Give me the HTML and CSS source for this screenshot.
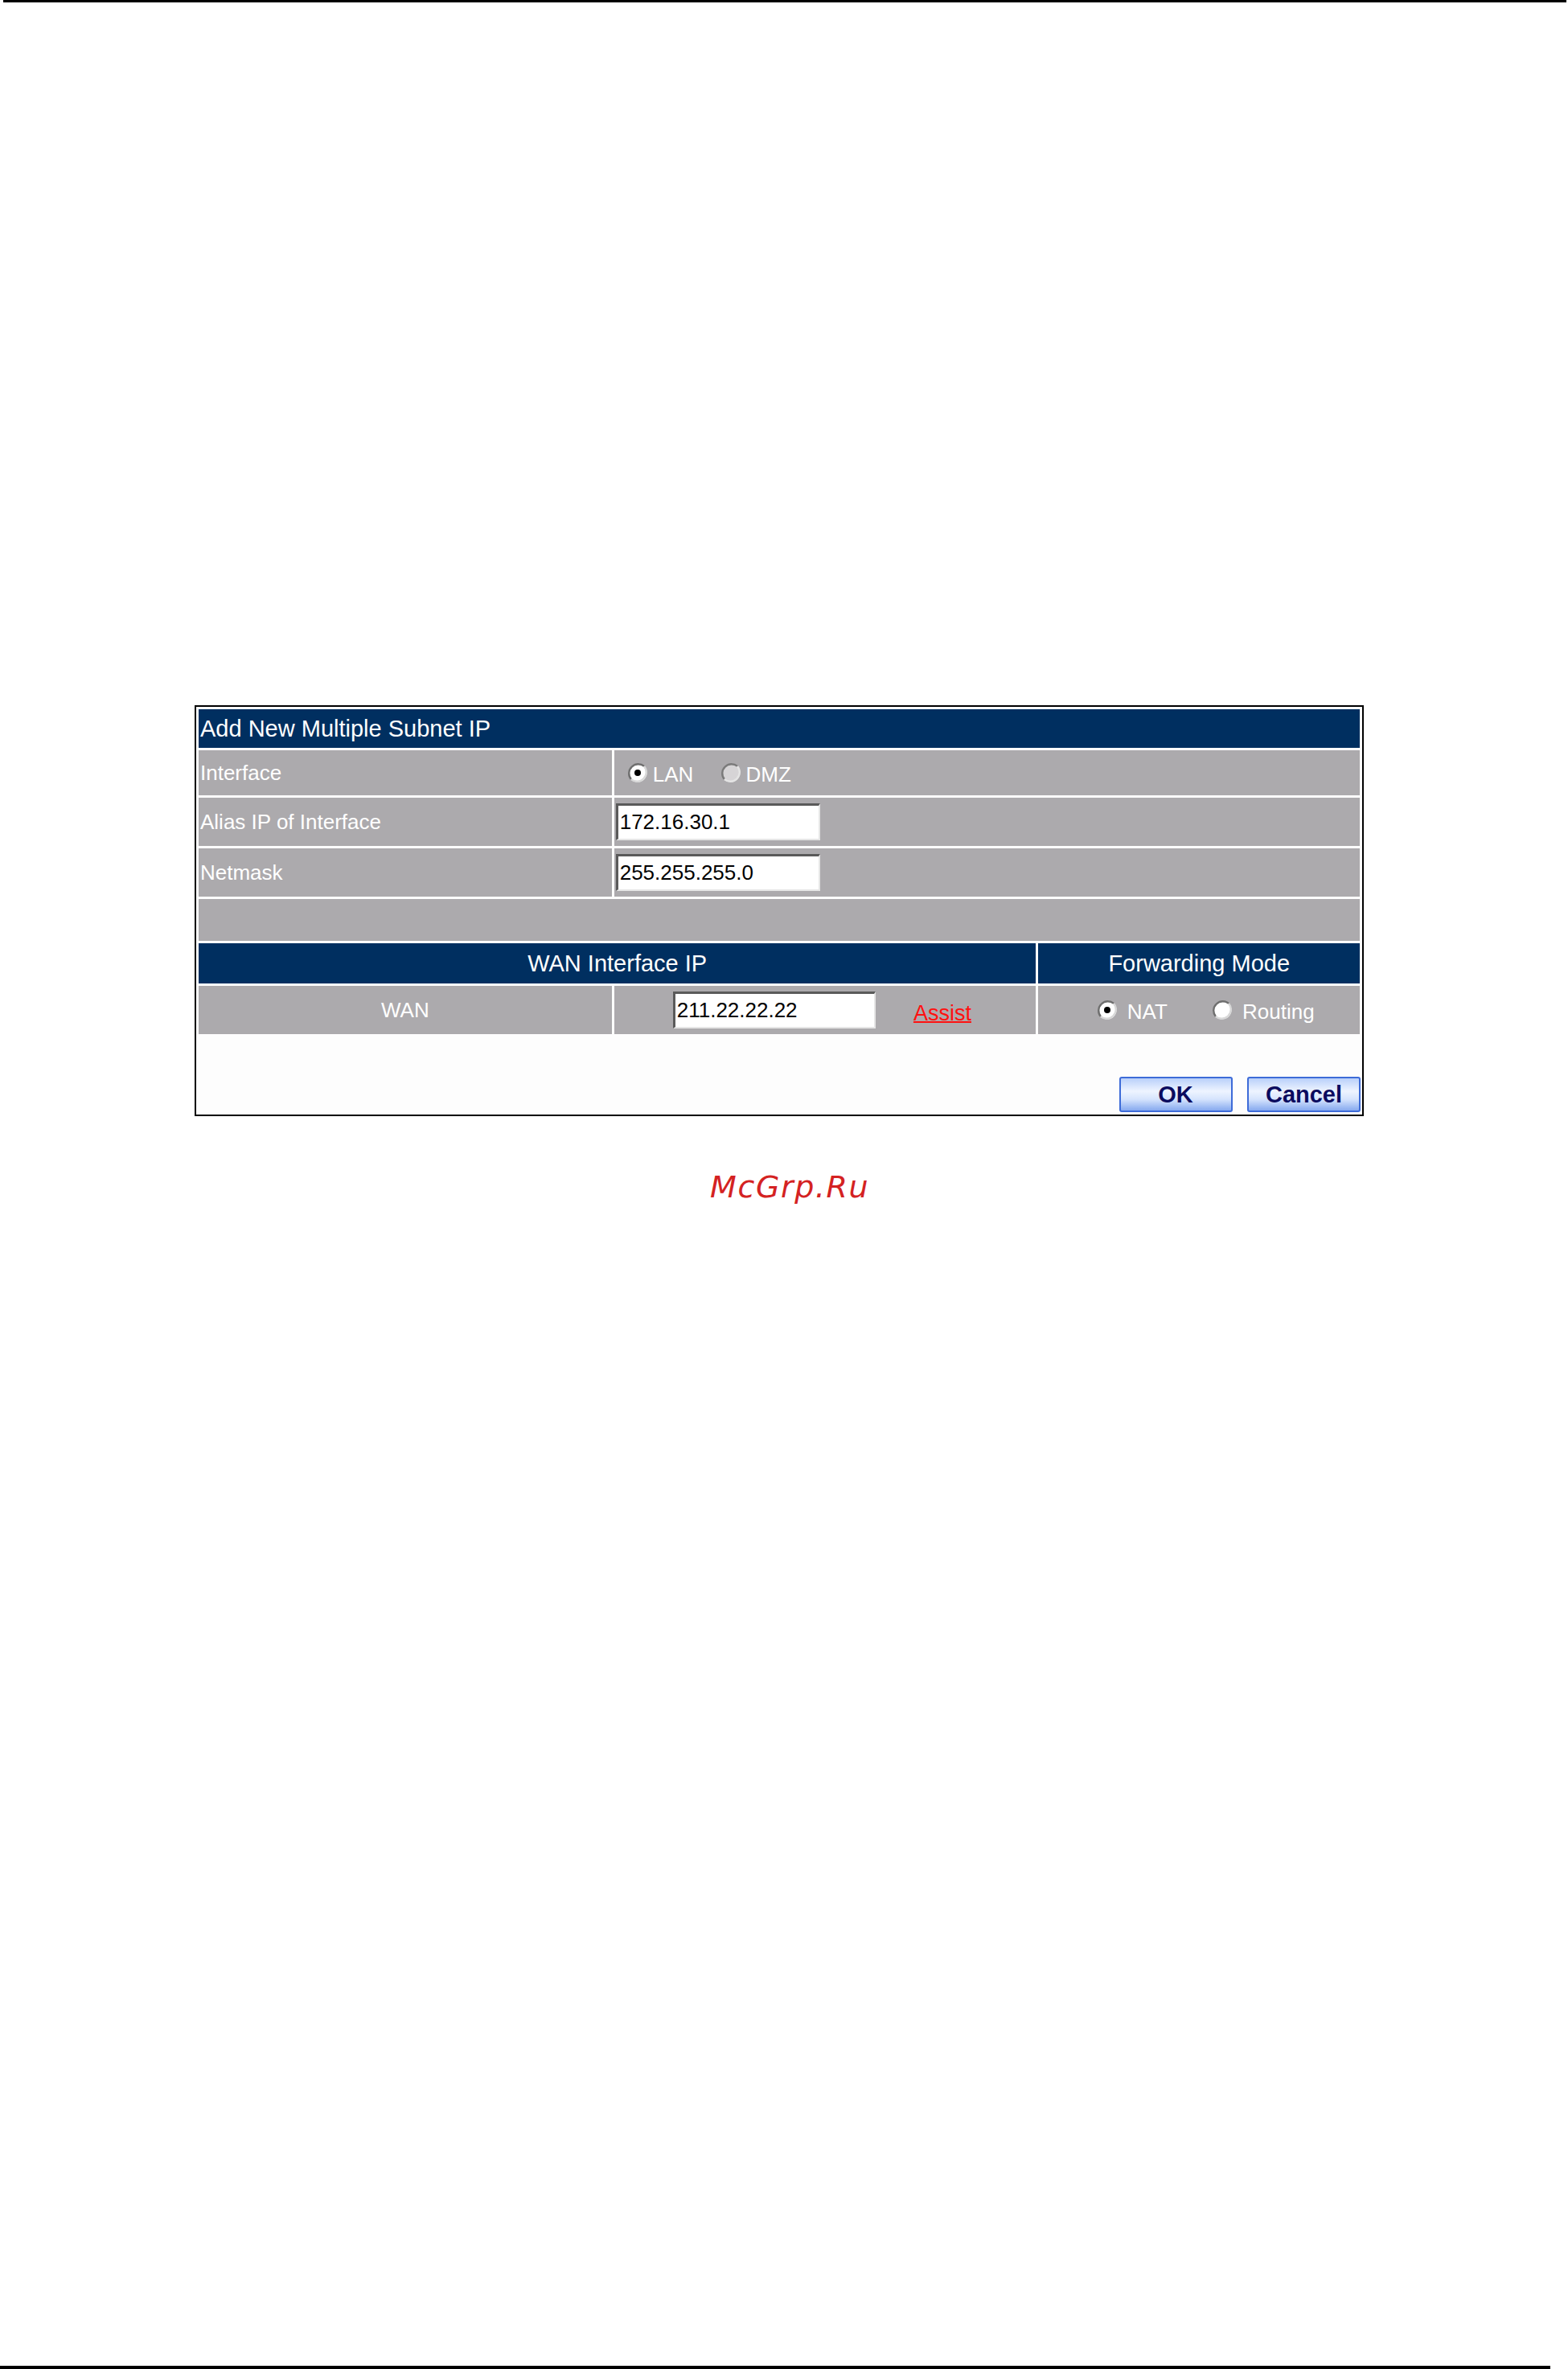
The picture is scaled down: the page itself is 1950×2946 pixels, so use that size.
FILE: index.html
```html
<!DOCTYPE html>
<html lang="en">
<head>
    <meta charset="UTF-8">
    <title>Add New Multiple Subnet IP</title>
    <link rel="stylesheet" href="styles.css">
</head>
<body>
    <div class="page">
        <div class="rule rule-top"></div>

        <div class="content">
            <table class="panel">
                <colgroup>
                    <col class="col-label">
                    <col class="col-value">
                    <col class="col-mode">
                </colgroup>
                <tr class="head head-main">
                    <td colspan="3">Add New Multiple Subnet IP</td>
                </tr>
                <tr class="row row-iface">
                    <td class="label">Interface</td>
                    <td class="value" colspan="2">
                        <span class="radio-group">
                            <span class="radio checked"><svg width="26" height="26" viewBox="0 0 26 26"><circle cx="13" cy="13" r="11.5" fill="#ffffff"/><path d="M4.9 21.1A11.5 11.5 0 0 1 21.1 4.9" fill="none" stroke="#6e6e6e" stroke-width="2.4"/><path d="M21.1 4.9A11.5 11.5 0 0 1 4.9 21.1" fill="none" stroke="#d8d8d8" stroke-width="2.4"/><circle cx="13" cy="13" r="4" fill="#000"/></svg></span>
                            <span class="radio-text">LAN</span>
                        </span>
                        <span class="radio-group">
                            <span class="radio off"><svg width="26" height="26" viewBox="0 0 26 26"><circle cx="13" cy="13" r="11.5" fill="#d6d4d6"/><path d="M4.9 21.1A11.5 11.5 0 0 1 21.1 4.9" fill="none" stroke="#7a7a7a" stroke-width="2.4"/><path d="M21.1 4.9A11.5 11.5 0 0 1 4.9 21.1" fill="none" stroke="#e4e4e4" stroke-width="2.4"/></svg></span>
                            <span class="radio-text">DMZ</span>
                        </span>
                    </td>
                </tr>
                <tr class="row row-field">
                    <td class="label">Alias IP of Interface</td>
                    <td class="value" colspan="2"><input class="field" type="text" value="172.16.30.1"></td>
                </tr>
                <tr class="row row-field">
                    <td class="label">Netmask</td>
                    <td class="value" colspan="2"><input class="field" type="text" value="255.255.255.0"></td>
                </tr>
                <tr class="row row-blank">
                    <td colspan="3"></td>
                </tr>
                <tr class="head head-sub">
                    <td colspan="2">WAN Interface IP</td>
                    <td>Forwarding Mode</td>
                </tr>
                <tr class="row row-wan">
                    <td class="center">WAN</td>
                    <td class="value wan-ip">
                        <input class="field" type="text" value="211.22.22.22">
                        <a class="assist" href="#">Assist</a>
                    </td>
                    <td class="center mode">
                        <span class="radio-group">
                            <span class="radio checked"><svg width="26" height="26" viewBox="0 0 26 26"><circle cx="13" cy="13" r="11.5" fill="#ffffff"/><path d="M4.9 21.1A11.5 11.5 0 0 1 21.1 4.9" fill="none" stroke="#6e6e6e" stroke-width="2.4"/><path d="M21.1 4.9A11.5 11.5 0 0 1 4.9 21.1" fill="none" stroke="#d8d8d8" stroke-width="2.4"/><circle cx="13" cy="13" r="4" fill="#000"/></svg></span>
                            <span class="radio-text">NAT</span>
                        </span>
                        <span class="radio-group gap">
                            <span class="radio"><svg width="26" height="26" viewBox="0 0 26 26"><circle cx="13" cy="13" r="11.5" fill="#ffffff"/><path d="M4.9 21.1A11.5 11.5 0 0 1 21.1 4.9" fill="none" stroke="#6e6e6e" stroke-width="2.4"/><path d="M21.1 4.9A11.5 11.5 0 0 1 4.9 21.1" fill="none" stroke="#d8d8d8" stroke-width="2.4"/></svg></span>
                            <span class="radio-text">Routing</span>
                        </span>
                    </td>
                </tr>
                <tr class="actions">
                    <td colspan="3">
                        <button class="btn" type="button">OK</button>
                        <button class="btn" type="button">Cancel</button>
                    </td>
                </tr>
            </table>

            <p class="mark">McGrp.Ru</p>
        </div>

        <div class="rule rule-bottom"></div>
    </div>
</body>
</html>
```

FILE: styles.css
```css
:root {
    --navy: #002f60;
    --cell: #acaaad;
    --text-light: #ffffff;
}
body {
    margin: 0;
    padding: 0;
    background-color: #ffffff;
    font-family: 'Liberation Sans', Arial, sans-serif;
}
.page {
    min-height: 2946px;
    display: flex;
    flex-direction: column;
}
.rule {
    background-color: #000;
}
.rule-top {
    height: 3px;
    margin-left: 4px;
    width: 1944px;
}
.rule-bottom {
    height: 4px;
    width: 1928px;
    margin-top: auto;
}
.content {
    padding-top: 874px;
}

/* settings panel */
.panel {
    margin-left: 242px;
    width: 1454px;
    table-layout: fixed;
    border: 2px solid #000;
    border-spacing: 3px;
    background-color: #fdfdfd;
}
.col-label { width: 513px; }
.col-value { width: 524px; }
.col-mode { width: 399px; }
.panel td {
    padding: 0;
    white-space: nowrap;
}
.head td {
    background-color: var(--navy);
    color: var(--text-light);
    font-size: 29px;
    height: 48px;
}
.head-main td {
    padding-left: 2px;
}
.head-sub td {
    text-align: center;
    height: 50px;
}
.row td {
    background-color: var(--cell);
    color: var(--text-light);
    font-size: 26px;
}
.row .label {
    padding-left: 2px;
}
.row .center {
    text-align: center;
}
.row-iface td { height: 56px; }
.row-field td { height: 60px; }
.row-blank td { height: 52px; }
.row-wan td { height: 60px; }

/* cells with a top offset keep the row at its own height */
.row-iface .value {
    height: 48px;
    padding-left: 16px;
    padding-top: 8px;
}
.row-wan .mode {
    height: 51px;
    padding-left: 16px;
    padding-top: 9px;
}
.radio-group {
    display: inline-flex;
    align-items: center;
    margin-right: 26px;
}
.radio-group.gap {
    margin-left: 22px;
    margin-right: 0;
}
.radio {
    display: inline-flex;
    width: 26px;
    height: 26px;
    margin-right: 6px;
    margin-top: -4px;
}
.row-wan .radio {
    margin-right: 12px;
}
.radio-text {
    line-height: 1;
}

.field {
    box-sizing: border-box;
    width: 254px;
    height: 46px;
    margin: 0 0 0 2px;
    padding: 0 2px;
    border-style: solid;
    border-width: 3px 2px 2px 3px;
    border-color: #5a5a5a #e6e6e6 #e6e6e6 #5a5a5a;
    background-color: #fff;
    color: #000;
    font-family: 'Liberation Sans', Arial, sans-serif;
    font-size: 26px;
    vertical-align: middle;
}
.wan-ip {
    padding-left: 73px !important;
}
.wan-ip .field {
    margin-left: 0;
    width: 252px;
}
.assist {
    margin-left: 40px;
    color: #ff1010;
    font-size: 27px;
    vertical-align: -6px;
    text-decoration-thickness: 2px;
}

.actions td {
    height: 94px;
    text-align: right;
    vertical-align: bottom;
    padding-right: 0;
    padding-bottom: 0;
}
.btn {
    width: 141px;
    height: 44px;
    margin-left: 12px;
    margin-right: -1px;
    padding: 0;
    border: 2px solid #3d6bd8;
    border-radius: 3px;
    background: linear-gradient(#b9d0fa 0%, #eef4ff 40%, #d6e4fd 65%, #86a9ef 100%);
    color: #0b0b5e;
    font-family: 'Liberation Sans', Arial, sans-serif;
    font-weight: bold;
    font-size: 29px;
    line-height: 40px;
    vertical-align: bottom;
}
.btn + .btn {
    margin-left: 15px;
}

.mark {
    margin: 66px 0 0 883px;
    color: #d42222;
    font-family: 'DejaVu Sans', sans-serif;
    font-style: italic;
    font-size: 38px;
    letter-spacing: 1.6px;
}
```
